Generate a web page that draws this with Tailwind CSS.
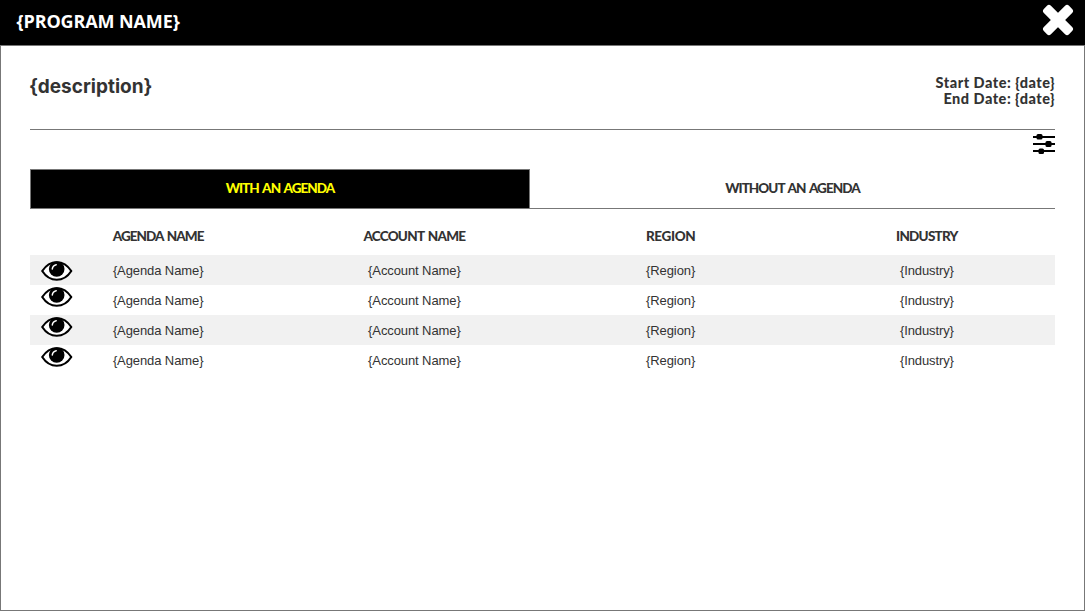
<!DOCTYPE html>
<html lang="en">
<head>
<meta charset="utf-8">
<title>Program</title>
<script src="https://cdn.jsdelivr.net/npm/@tailwindcss/browser@4"></script>
</head>
<body class="bg-white text-[#333333]">
<svg class="hidden">
  <symbol id="eye" viewBox="0 0 32 20">
    <path d="M1.2 10C5 4.2 10 1.2 15.7 1.2S26.6 4.2 30.3 10C26.6 15.8 21.6 18.8 15.7 18.8S5 15.8 1.2 10Z" fill="#fff" stroke="#000" stroke-width="2.1" stroke-linejoin="round"/>
    <circle cx="15.7" cy="8" r="7.8"/>
    <path d="M11.3 8C11.5 5.6 12.9 4.2 15.2 3.7" fill="none" stroke="#fff" stroke-width="1.5" stroke-linecap="round"/>
  </symbol>
</svg>
<div class="flex h-[611px] w-[1085px] flex-col border border-t-0 border-[#777777]">
  <header class="-mx-px flex h-[46px] shrink-0 items-start justify-between border-b border-[#777777] bg-black pl-[16.5px] pr-[11px]">
    <h1 class="pt-[9px] font-['Open_Sans'] text-[18px] leading-6 font-bold tracking-[-0.12px] whitespace-nowrap text-white">{PROGRAM NAME}</h1>
    <svg class="mt-1 h-8 w-8" viewBox="0 0 32 32" fill="#fff"><rect x="-1.8" y="11" width="35.6" height="10" rx="2.8" transform="rotate(45 16 16)"/><rect x="-1.8" y="11" width="35.6" height="10" rx="2.8" transform="rotate(-45 16 16)"/></svg>
  </header>
  <main class="px-[29px]">
    <section class="flex h-[84px] justify-between border-b border-[#777777] pt-[29px]">
      <h2 class="-ml-px font-[Inter] text-[19px] leading-6 font-bold">{description}</h2>
      <div class="text-right font-[Lato] text-[14.5px] leading-4 font-black tracking-[0.5px]"><p>Start Date: {date}</p><p>End Date: {date}</p></div>
    </section>
    <div class="flex h-[39px] justify-end pt-1">
      <svg class="h-[21px] w-[22px]" viewBox="0 0 22 21"><path d="M0 3h22M0 10h22M0 17h22" stroke="#000" stroke-width="2"/><rect x="3.5" y="0" width="6" height="5.5" rx="1.5"/><rect x="12.5" y="7" width="6" height="6" rx="1.5"/><rect x="5.5" y="14.5" width="5.5" height="5.5" rx="1.5"/></svg>
    </div>
    <nav class="flex h-10 border-b border-[#777777] text-center font-[Lato] text-[13.5px] leading-[37px] font-black tracking-[-0.95px] [word-spacing:1.5px]">
      <div class="w-[500px] border border-b-0 border-[#777777] bg-black text-[#ffff00]"><span>WITH AN AGENDA</span></div>
      <div class="flex-1 pt-px"><span>WITHOUT AN AGENDA</span></div>
    </nav>
    <div class="grid h-[46px] grid-cols-4 pt-[9px] text-center font-[Lato] text-[13.5px] leading-[37px] font-black tracking-[-0.75px] [word-spacing:1.5px]">
      <span class="tracking-[-0.98px]">AGENDA NAME</span><span>ACCOUNT NAME</span><span class="tracking-[-0.35px]">REGION</span><span>INDUSTRY</span>
    </div>
    <div class="text-center font-['Liberation_Sans'] text-[13px] leading-[32px] tracking-[-0.1px]">
      <div class="grid h-[30px] grid-cols-4 bg-[#f1f1f1]"><div class="relative"><svg class="absolute top-[6px] left-[11px] h-5 w-8"><use href="#eye"/></svg>{Agenda Name}</div><div>{Account Name}</div><div>{Region}</div><div>{Industry}</div></div>
      <div class="grid h-[30px] grid-cols-4"><div class="relative"><svg class="absolute top-[2px] left-[11px] h-5 w-8"><use href="#eye"/></svg>{Agenda Name}</div><div>{Account Name}</div><div>{Region}</div><div>{Industry}</div></div>
      <div class="grid h-[30px] grid-cols-4 bg-[#f1f1f1]"><div class="relative"><svg class="absolute top-[2px] left-[11px] h-5 w-8"><use href="#eye"/></svg>{Agenda Name}</div><div>{Account Name}</div><div>{Region}</div><div>{Industry}</div></div>
      <div class="grid h-[30px] grid-cols-4"><div class="relative"><svg class="absolute top-[2px] left-[11px] h-5 w-8"><use href="#eye"/></svg>{Agenda Name}</div><div>{Account Name}</div><div>{Region}</div><div>{Industry}</div></div>
    </div>
  </main>
</div>
</body>
</html>
